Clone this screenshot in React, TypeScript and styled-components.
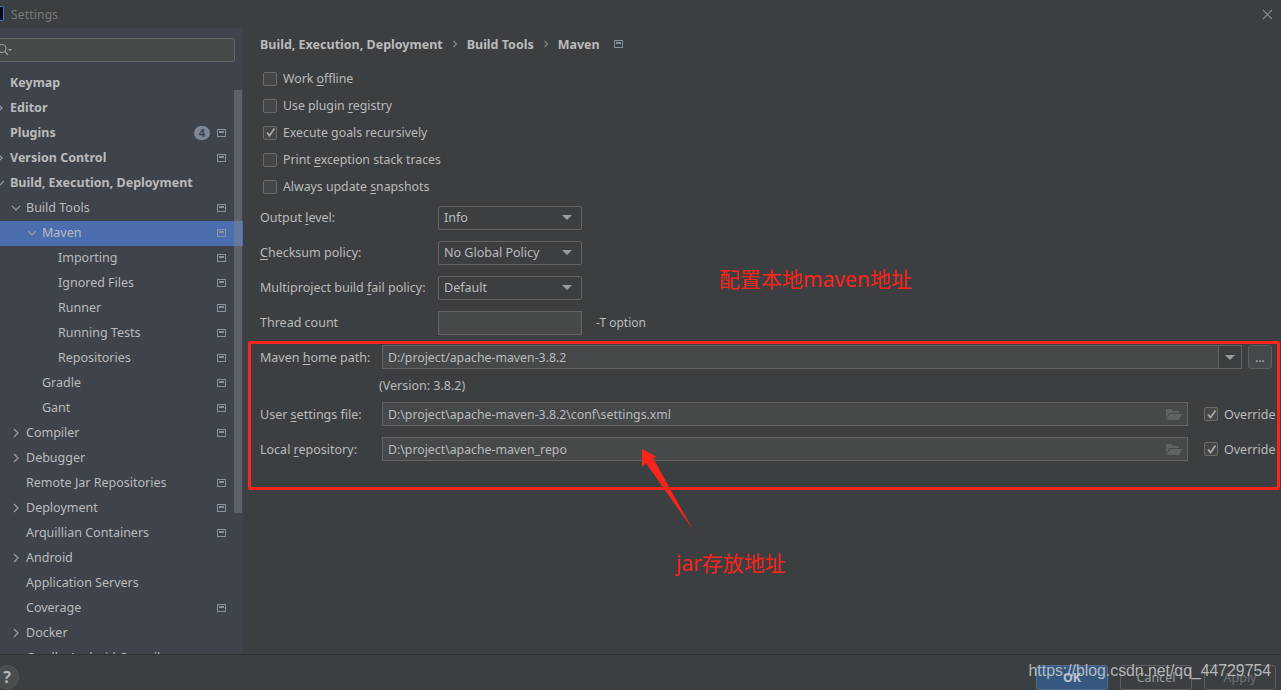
import React from "react";
import styled, { createGlobalStyle } from "styled-components";

const UI_FONT = `"Noto Sans", "Noto Sans CJK SC", sans-serif`;
const TEXT = "#bbbbbb";
const RED = "#f9241a";

// =============================================================================
// Styled Components
// =============================================================================

const Global = createGlobalStyle`
  html, body {
    margin: 0;
    padding: 0;
    background: #3c3f41;
  }
  u {
    text-underline-offset: 2px;
    text-decoration-thickness: 1px;
  }
`;

const Page = styled.div`
  position: relative;
  display: flex;
  flex-direction: column;
  width: 1281px;
  height: 690px;
  overflow: hidden;
  background: #3c3f41;
  color: ${TEXT};
  font-family: ${UI_FONT};
  font-size: 12.5px;
`;

const TitleBar = styled.header`
  display: flex;
  align-items: center;
  justify-content: space-between;
  flex: 0 0 28px;
  padding-right: 8px;
  background: #3c3f41;
`;

const TitleLeft = styled.div`
  display: flex;
  align-items: center;
  gap: 7px;
`;

const AppIcon = styled.div`
  width: 12px;
  height: 13px;
  margin-left: -10px;
  margin-top: -1px;
  background: #0a0a12;
  border: 1px solid #1f7ae0;
  border-radius: 1px;
`;

const TitleText = styled.span`
  color: #777a7c;
  font-size: 12px;
  letter-spacing: 0.2px;
`;

const Body = styled.div`
  display: flex;
  flex: 0 0 626px;
  min-height: 0;
`;

const Sidebar = styled.aside`
  position: relative;
  flex: 0 0 243px;
  overflow: hidden;
  background: #3e434c;
`;

const SearchBox = styled.div`
  display: flex;
  align-items: center;
  height: 24px;
  width: 245px;
  margin: 10px 0 9px -10px;
  padding-left: 6px;
  box-sizing: border-box;
  background: #45494a;
  border: 1px solid #646464;
  border-radius: 2px;
`;

const Row = styled.div<{ $level: number; $selected?: boolean }>`
  display: flex;
  align-items: center;
  height: 25px;
  padding-left: ${(p) => 10 + p.$level * 16}px;
  background: ${(p) => (p.$selected ? "#4b6eaf" : "transparent")};
`;

const ChevronSlot = styled.span`
  display: flex;
  align-items: center;
  justify-content: center;
  width: 20px;
  margin-left: -20px;
  margin-bottom: 2px;
  flex: none;
`;

const RowLabel = styled.span<{ $bold?: boolean }>`
  flex: 1;
  margin-bottom: 2px;
  font-weight: ${(p) => (p.$bold ? 700 : 400)};
  white-space: nowrap;
`;

const RowTail = styled.span`
  display: flex;
  align-items: center;
  gap: 7px;
  margin-right: 17px;
  margin-bottom: 2px;
`;

const Badge = styled.span`
  display: flex;
  align-items: center;
  justify-content: center;
  width: 16px;
  height: 14px;
  border-radius: 8px;
  background: #7b8796;
  color: #3e434c;
  font-size: 11px;
  font-weight: 700;
`;

const Scrollbar = styled.div`
  position: absolute;
  top: 62px;
  right: 1px;
  width: 8px;
  height: 423px;
  background: rgba(130, 135, 142, 0.45);
`;

const Main = styled.main`
  flex: 1;
  min-width: 0;
  display: flex;
  flex-direction: column;
  padding-left: 5px;
`;

const Breadcrumb = styled.nav`
  display: flex;
  align-items: center;
  flex: 0 0 32px;
  padding-left: 12px;
  gap: 7px;
  font-weight: 700;
`;

const BreadcrumbIcon = styled.span`
  margin-left: 7px;
`;

const Checks = styled.div`
  display: flex;
  flex-direction: column;
  margin: 5px 0 0 15px;
  font-size: 12.3px;
`;

const CheckRow = styled.label`
  display: flex;
  align-items: center;
  gap: 6px;
  height: 27px;
`;

const Box = styled.span`
  display: flex;
  align-items: center;
  justify-content: center;
  flex: none;
  width: 12px;
  height: 12px;
  background: #43474a;
  border: 1px solid #6b6b6b;
  border-radius: 2px;
`;

const FormGrid = styled.div`
  display: grid;
  grid-template-columns: 178px 144px auto;
  grid-auto-rows: 35px;
  align-items: center;
  padding-left: 12px;
`;

const FieldLabel = styled.span`
  white-space: nowrap;
`;

const Select = styled.div`
  display: flex;
  align-items: center;
  justify-content: space-between;
  height: 24px;
  padding: 0 9px 0 5px;
  box-sizing: border-box;
  border: 1px solid #646464;
  border-radius: 2px;
  background: #3c3f41;
`;

const Arrow = styled.span`
  width: 0;
  height: 0;
  border-left: 5px solid transparent;
  border-right: 5px solid transparent;
  border-top: 5px solid #9a9da0;
`;

const Input = styled.div`
  display: flex;
  align-items: center;
  justify-content: space-between;
  height: 24px;
  padding: 0 5px;
  box-sizing: border-box;
  background: #45494a;
  border: 1px solid #646464;
  font-size: 12.3px;
`;

const Hint = styled.span`
  margin-left: 14px;
  font-size: 12px;
`;

const PathGroup = styled.section`
  margin: 1px 1px 0 0;
  padding: 1px 0 26px 9px;
  border: 3px solid ${RED};
  border-radius: 2px;
`;

const PathRow = styled.div<{ $gapTop?: number }>`
  display: grid;
  grid-template-columns: 122px 806px auto;
  align-items: center;
  height: 24px;
  margin-top: ${(p) => p.$gapTop ?? 0}px;
`;

const HomeRow = styled.div`
  display: grid;
  grid-template-columns: 122px 860px auto;
  align-items: center;
  height: 24px;
`;

const HomeInput = styled(Input)`
  padding-right: 0;
`;

const ComboArrow = styled.span`
  display: flex;
  align-items: center;
  justify-content: center;
  width: 22px;
  height: 100%;
  background: #3c3f41;
  border-left: 1px solid #646464;
`;

const Ellipsis = styled.div`
  display: flex;
  align-items: center;
  justify-content: center;
  width: 24px;
  height: 24px;
  margin-left: 6px;
  box-sizing: border-box;
  background: #46494b;
  border: 1px solid #5e6060;
  border-radius: 3px;
  font-size: 12px;
`;

const VersionRow = styled.div`
  display: flex;
  align-items: center;
  height: 33px;
  padding-left: 119px;
`;

const OverrideCell = styled.label`
  display: flex;
  align-items: center;
  gap: 6px;
  margin-left: 16px;
  white-space: nowrap;
`;

const Footer = styled.footer`
  display: flex;
  align-items: flex-start;
  justify-content: space-between;
  flex: 0 0 36px;
  box-sizing: border-box;
  padding: 10px 5px 0 0;
  background: #3c3f41;
  border-top: 1px solid #2e3032;
`;

const Help = styled.div`
  display: flex;
  align-items: center;
  justify-content: center;
  width: 24px;
  height: 24px;
  margin-left: -5px;
  border-radius: 50%;
  background: #4a4d4f;
  border: 1px solid #55585a;
  box-sizing: border-box;
  color: #b5b5b5;
  font-size: 16px;
  font-weight: 700;
`;

const Actions = styled.div`
  display: flex;
  gap: 12px;
`;

const Action = styled.button<{ $kind: "primary" | "plain" | "disabled" }>`
  width: 72px;
  height: 25px;
  padding: 0;
  font-family: ${UI_FONT};
  font-size: 12.5px;
  font-weight: ${(p) => (p.$kind === "primary" ? 700 : 400)};
  color: ${(p) => (p.$kind === "disabled" ? "#6f7275" : p.$kind === "primary" ? "#b9c4cf" : "#9a9c9e")};
  background: ${(p) => (p.$kind === "primary" ? "#365880" : "#3c3f41")};
  border: 1px solid ${(p) => (p.$kind === "primary" ? "#4c708c" : "#5e6060")};
  border-radius: 3px;
`;

const Watermark = styled.div`
  position: absolute;
  right: 10px;
  top: 660px;
  color: rgba(205, 205, 205, 0.86);
  font-family: "Liberation Sans", Arial, sans-serif;
  font-size: 15.8px;
  line-height: 22px;
  pointer-events: none;
`;

const Note = styled.div<{ $x: number; $y: number }>`
  position: absolute;
  left: ${(p) => p.$x}px;
  top: ${(p) => p.$y}px;
  color: ${RED};
  font-size: 21px;
  line-height: 28px;
  white-space: nowrap;
`;

const ArrowOverlay = styled.svg`
  position: absolute;
  left: 630px;
  top: 440px;
  pointer-events: none;
`;

// =============================================================================
// Icons
// =============================================================================

const SectionIcon = () => (
  <svg width="9" height="8" viewBox="0 0 9 8" style={{ display: "block" }}>
    <rect x="0.5" y="0.5" width="8" height="7" fill="none" stroke="#87929e" />
    <rect x="2" y="2" width="5" height="2" fill="#87929e" />
  </svg>
);

const Chevron = ({ open, dim }: { open?: boolean; dim?: boolean }) => (
  <svg width="10" height="10" viewBox="0 0 10 10" style={{ display: "block" }}>
    <path
      d={open ? "M1 3 L5 7 L9 3" : dim ? "M3.5 2 L6.5 5 L3.5 8" : "M3 1 L7 5 L3 9"}
      fill="none"
      stroke={dim ? "#85888a" : "#9aa0a6"}
      strokeWidth="1.2"
    />
  </svg>
);

const Check = () => (
  <svg width="11" height="11" viewBox="0 0 11 11" style={{ display: "block" }}>
    <path d="M2 5.5 L4.5 8.5 L9.5 1.5" fill="none" stroke="#a9abad" strokeWidth="1.7" />
  </svg>
);

const FolderIcon = () => (
  <svg width="16" height="13" viewBox="0 0 16 13" style={{ display: "block" }}>
    <path d="M0 1 H5 L7 3 H13 V5 H3 L0 11 Z" fill="#5f6365" />
    <path d="M3.5 6 H16 L13 12 H0.5 Z" fill="#5f6365" />
  </svg>
);

const SearchIcon = () => (
  <svg width="18" height="14" viewBox="0 0 18 14" style={{ display: "block" }}>
    <circle cx="5" cy="5.5" r="4" fill="none" stroke="#9a9da0" strokeWidth="1.2" />
    <path d="M8 8.5 L11 12" stroke="#9a9da0" strokeWidth="1.2" />
    <path d="M11 6 H15 L13 8.5 Z" fill="#9a9da0" />
  </svg>
);

const CloseIcon = () => (
  <svg width="11" height="11" viewBox="0 0 11 11" style={{ display: "block" }}>
    <path d="M1 1 L10 10 M10 1 L1 10" stroke="#8b8d8f" strokeWidth="1.1" />
  </svg>
);

// =============================================================================
// Data
// =============================================================================

interface TreeItem {
  label: string;
  level: number;
  bold?: boolean;
  chevron?: "open" | "closed";
  icon?: boolean;
  badge?: string;
  selected?: boolean;
}

const TREE: TreeItem[] = [
  { label: "Keymap", level: 0, bold: true },
  { label: "Editor", level: 0, bold: true, chevron: "closed" },
  { label: "Plugins", level: 0, bold: true, icon: true, badge: "4" },
  { label: "Version Control", level: 0, bold: true, chevron: "closed", icon: true },
  { label: "Build, Execution, Deployment", level: 0, bold: true, chevron: "open" },
  { label: "Build Tools", level: 1, chevron: "open", icon: true },
  { label: "Maven", level: 2, chevron: "open", icon: true, selected: true },
  { label: "Importing", level: 3, icon: true },
  { label: "Ignored Files", level: 3, icon: true },
  { label: "Runner", level: 3, icon: true },
  { label: "Running Tests", level: 3, icon: true },
  { label: "Repositories", level: 3, icon: true },
  { label: "Gradle", level: 2, icon: true },
  { label: "Gant", level: 2, icon: true },
  { label: "Compiler", level: 1, chevron: "closed", icon: true },
  { label: "Debugger", level: 1, chevron: "closed" },
  { label: "Remote Jar Repositories", level: 1, icon: true },
  { label: "Deployment", level: 1, chevron: "closed", icon: true },
  { label: "Arquillian Containers", level: 1, icon: true },
  { label: "Android", level: 1, chevron: "closed" },
  { label: "Application Servers", level: 1 },
  { label: "Coverage", level: 1, icon: true },
  { label: "Docker", level: 1, chevron: "closed" },
  { label: "Gradle-Android Compiler", level: 1, icon: true },
];

// =============================================================================
// Main Component
// =============================================================================

const Checkbox = ({ checked, children }: { checked?: boolean; children: React.ReactNode }) => (
  <CheckRow>
    <Box>{checked && <Check />}</Box>
    <span>{children}</span>
  </CheckRow>
);

const Override = () => (
  <OverrideCell>
    <Box>
      <Check />
    </Box>
    <span>Override</span>
  </OverrideCell>
);

const App = () => (
  <Page>
    <Global />
    <TitleBar>
      <TitleLeft>
        <AppIcon />
        <TitleText>Settings</TitleText>
      </TitleLeft>
      <CloseIcon />
    </TitleBar>

    <Body>
      <Sidebar>
        <SearchBox>
          <SearchIcon />
        </SearchBox>
        {TREE.map((item) => (
          <Row key={item.label} $level={item.level} $selected={item.selected}>
            <ChevronSlot>{item.chevron && <Chevron open={item.chevron === "open"} />}</ChevronSlot>
            <RowLabel $bold={item.bold}>{item.label}</RowLabel>
            <RowTail>
              {item.badge && <Badge>{item.badge}</Badge>}
              {item.icon && <SectionIcon />}
            </RowTail>
          </Row>
        ))}
        <Scrollbar />
      </Sidebar>

      <Main>
        <Breadcrumb>
          <span>Build, Execution, Deployment</span>
          <Chevron dim />
          <span>Build Tools</span>
          <Chevron dim />
          <span>Maven</span>
          <BreadcrumbIcon>
            <SectionIcon />
          </BreadcrumbIcon>
        </Breadcrumb>

        <Checks>
          <Checkbox>
            Work <u>o</u>ffline
          </Checkbox>
          <Checkbox>
            Use plugin <u>r</u>egistry
          </Checkbox>
          <Checkbox checked>
            Execute <u>g</u>oals recursively
          </Checkbox>
          <Checkbox>
            Print <u>e</u>xception stack traces
          </Checkbox>
          <Checkbox>
            Always update <u>s</u>napshots
          </Checkbox>
        </Checks>

        <FormGrid>
          <FieldLabel>
            Output <u>l</u>evel:
          </FieldLabel>
          <Select>
            Info
            <Arrow />
          </Select>
          <span />
          <FieldLabel>
            <u>C</u>hecksum policy:
          </FieldLabel>
          <Select>
            No Global Policy
            <Arrow />
          </Select>
          <span />
          <FieldLabel>
            Multiproject build <u>f</u>ail policy:
          </FieldLabel>
          <Select>
            Default
            <Arrow />
          </Select>
          <span />
          <FieldLabel>Thread count</FieldLabel>
          <Input />
          <Hint>-T option</Hint>
        </FormGrid>

        <PathGroup>
          <HomeRow>
            <FieldLabel>
              Maven <u>h</u>ome path:
            </FieldLabel>
            <HomeInput>
              D:/project/apache-maven-3.8.2
              <ComboArrow>
                <Arrow />
              </ComboArrow>
            </HomeInput>
            <Ellipsis>...</Ellipsis>
          </HomeRow>
          <VersionRow>(Version: 3.8.2)</VersionRow>
          <PathRow>
            <FieldLabel>
              User <u>s</u>ettings file:
            </FieldLabel>
            <Input>
              D:\project\apache-maven-3.8.2\conf\settings.xml
              <FolderIcon />
            </Input>
            <Override />
          </PathRow>
          <PathRow $gapTop={11}>
            <FieldLabel>
              Local <u>r</u>epository:
            </FieldLabel>
            <Input>
              D:\project\apache-maven_repo
              <FolderIcon />
            </Input>
            <Override />
          </PathRow>
        </PathGroup>
      </Main>
    </Body>

    <Footer>
      <Help>?</Help>
      <Actions>
        <Action $kind="primary">OK</Action>
        <Action $kind="plain">Cancel</Action>
        <Action $kind="disabled">Apply</Action>
      </Actions>
    </Footer>

    <Note $x={719} $y={265}>配置本地maven地址</Note>
    <Note $x={676} $y={549}>jar存放地址</Note>
    <ArrowOverlay width="70" height="95" viewBox="630 440 70 95">
      <polygon points="642,449 657,457 653,458 693,530 646,463 642,467" fill={RED} />
    </ArrowOverlay>
    <Watermark>https://blog.csdn.net/qq_44729754</Watermark>
  </Page>
);

export default App;
